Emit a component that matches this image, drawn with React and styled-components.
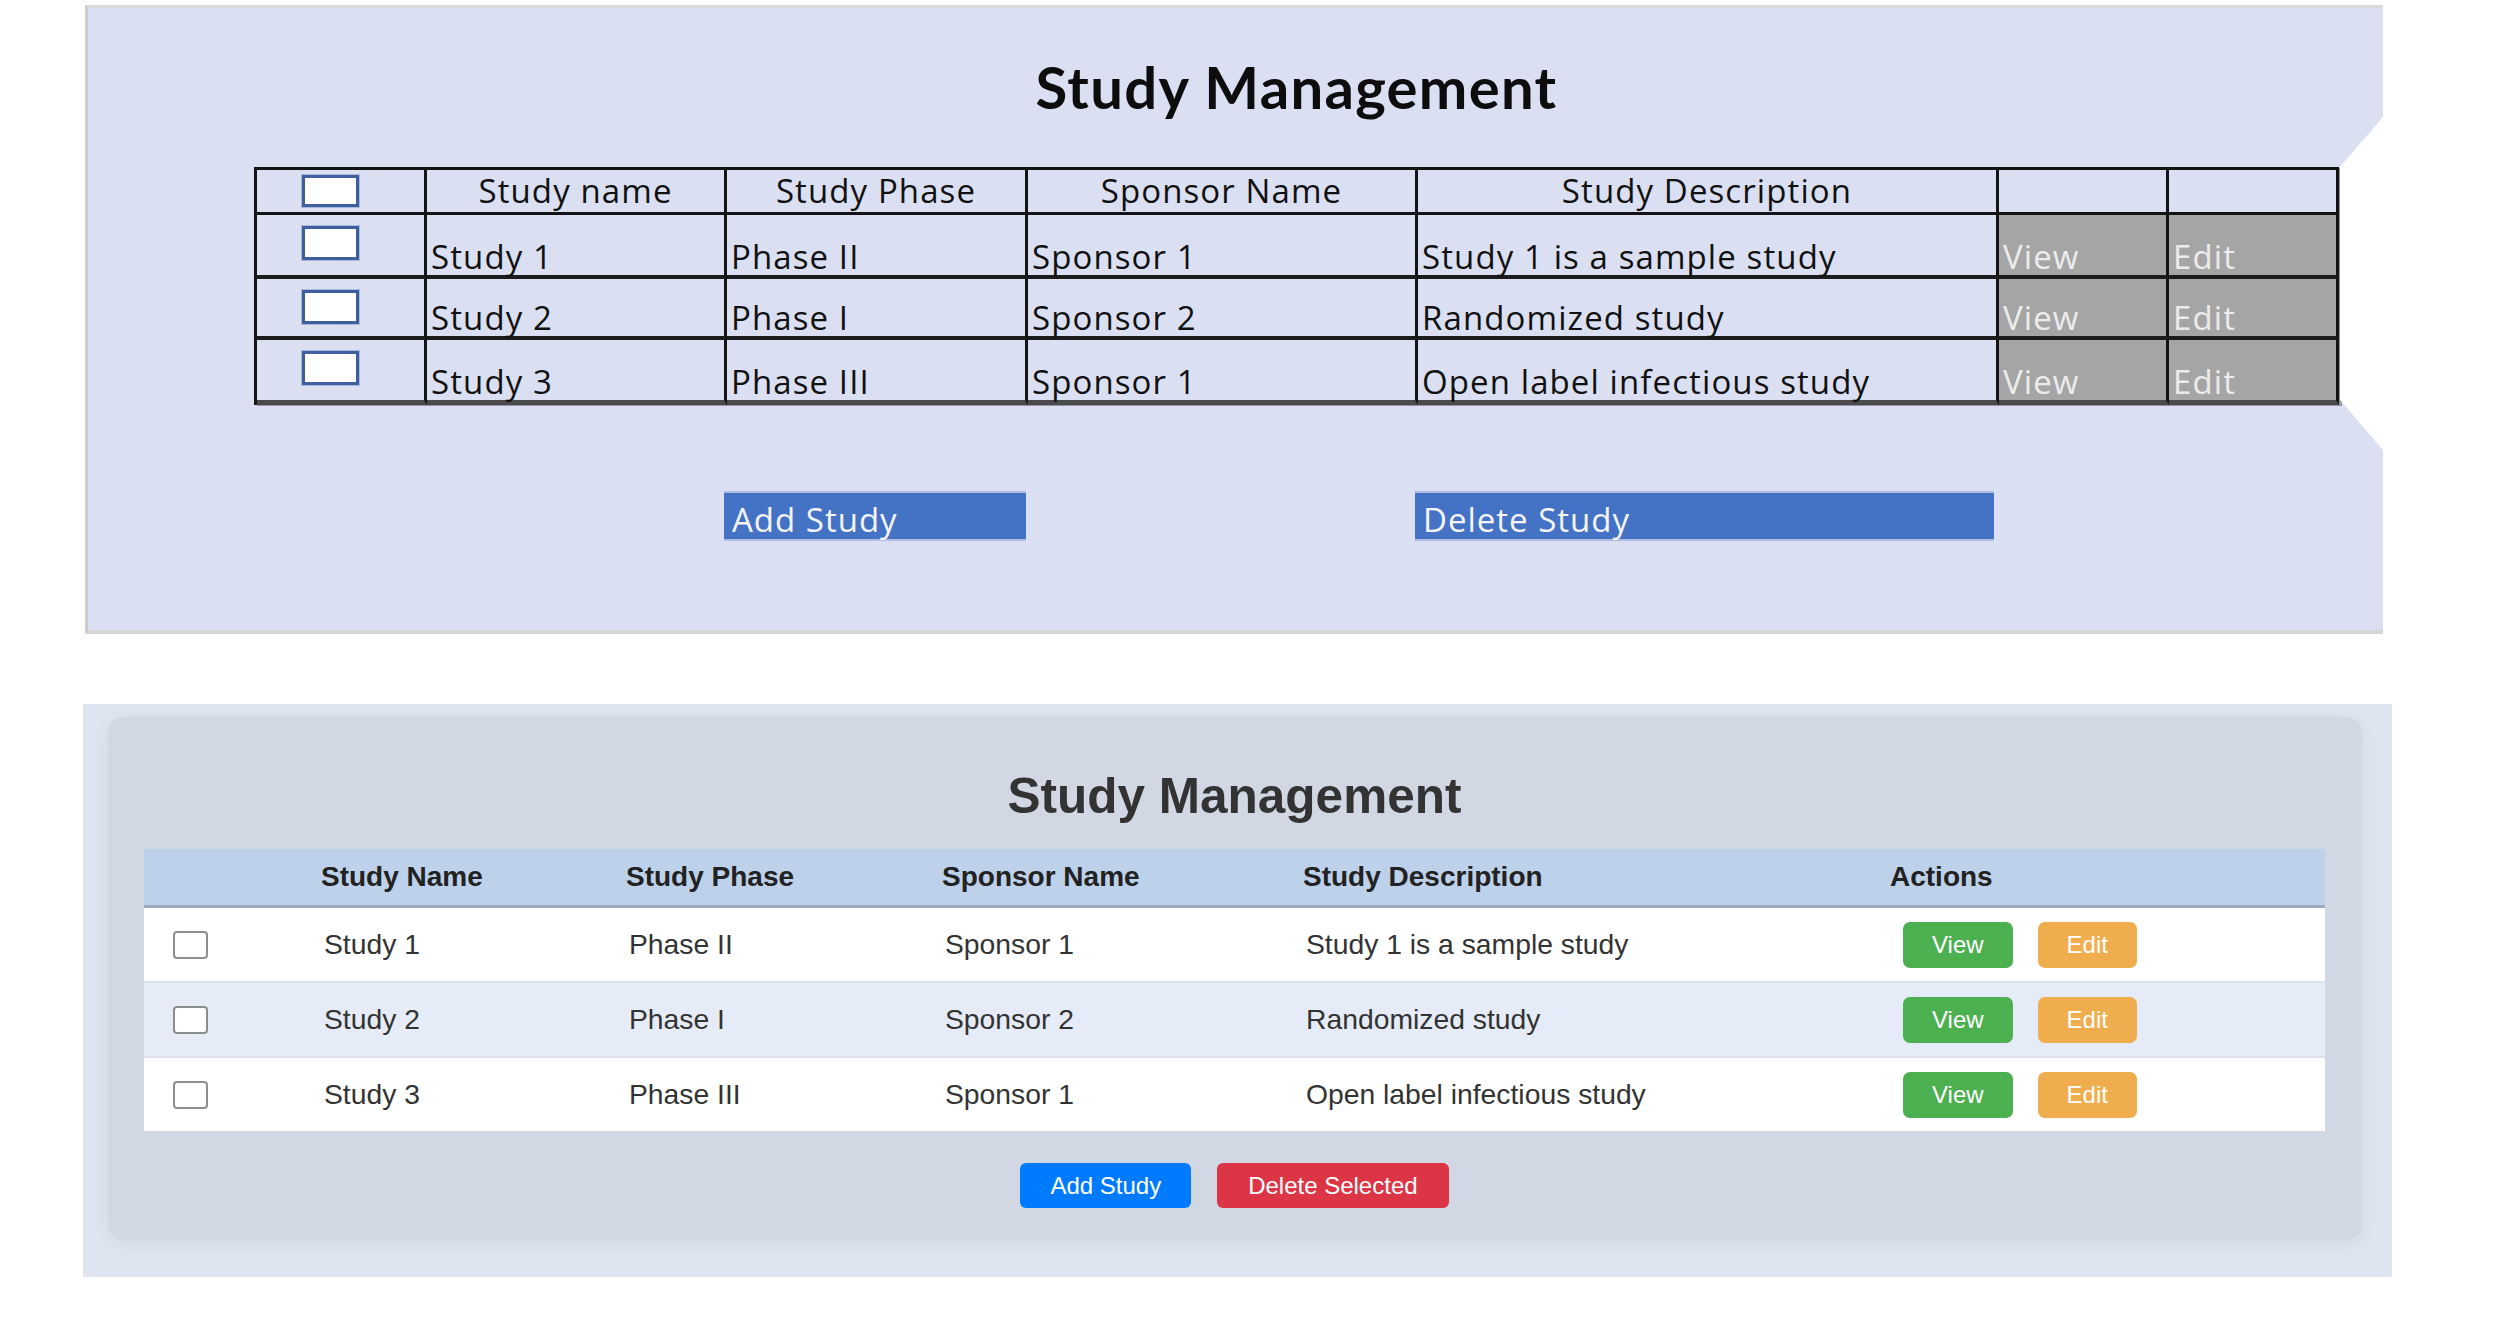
import React from 'react';
import styled, { createGlobalStyle } from 'styled-components';

const Global = createGlobalStyle`
  html, body { margin: 0; padding: 0; background: #ffffff; }
  body { font-family: "Liberation Sans", Arial, sans-serif; }
  * { box-sizing: border-box; }
`;

const studies = [
  { name: 'Study 1', phase: 'Phase II', sponsor: 'Sponsor 1', desc: 'Study 1 is a sample study' },
  { name: 'Study 2', phase: 'Phase I', sponsor: 'Sponsor 2', desc: 'Randomized study' },
  { name: 'Study 3', phase: 'Phase III', sponsor: 'Sponsor 1', desc: 'Open label infectious study' },
];

const Page = styled.main`
  display: flex;
  flex-direction: column;
  align-items: flex-start;
  gap: 70px;
  padding: 5px 0 0 83px;
`;

/* ---------- Mockup (top) ---------- */

const MockPanel = styled.section`
  width: 2298px;
  height: 629px;
  margin-left: 2px;
  background: #dae0f2;
  border-top: 3px solid #d9d9d9;
  border-left: 3px solid #cbcbcb;
  border-bottom: 4px solid #d5d5d5;
  padding-left: 166px;
  display: flex;
  flex-direction: column;
  align-items: flex-start;
  clip-path: polygon(0 0, 2298px 0, 2298px 112px, 2255px 162px, 2255px 395px, 2298px 445px, 2298px 100%, 0 100%);
`;

const MockTitle = styled.h1`
  width: 2085px;
  margin: 44px 0 0 0;
  text-align: center;
  font-family: Lato, "Open Sans", sans-serif;
  font-weight: 700;
  font-size: 58px;
  line-height: 70px;
  letter-spacing: 1.3px;
  color: #0d0d0d;
`;

const mockColumns = '170px 300px 301px 390px 581px 170px 170px';

const MockGrid = styled.div`
  margin-top: 45px;
  display: grid;
  grid-template-columns: ${mockColumns};
  grid-template-rows: 45px 64px 61px 65px;
  border-left: 3px solid #141414;
  border-top: 3px solid #141414;
  box-shadow: 3px 1px 0 rgba(60, 60, 60, 0.45);
`;

const MockCell = styled.div`
  border-right: 3px solid #141414;
  border-bottom: ${p => p.$bw}px solid ${p => p.$bc};
  background: ${p => (p.$gray ? '#a5a5a5' : 'transparent')};
  color: ${p => (p.$gray ? '#ececec' : '#111111')};
  display: flex;
  align-items: ${p => (p.$head ? 'center' : 'flex-end')};
  justify-content: ${p => (p.$head ? 'center' : 'flex-start')};
  padding: ${p => (p.$head ? '0 0 1px 0' : '0 0 2px 4px')};
  font-family: "Open Sans", sans-serif;
  font-size: 33px;
  line-height: 1;
  letter-spacing: 1.1px;
  white-space: nowrap;
`;

const MockBoxCell = styled.div`
  border-right: 3px solid #141414;
  border-bottom: ${p => p.$bw}px solid ${p => p.$bc};
  display: flex;
  align-items: flex-start;
  padding: ${p => (p.$head ? 5 : 11)}px 0 0 45px;
`;

const MockBox = styled.span`
  display: block;
  width: 57px;
  height: ${p => (p.$head ? 32 : 34)}px;
  background: #ffffff;
  border: 3px solid #3e5e9e;
  box-shadow: 0 0 0 1px rgba(120, 145, 200, 0.5);
`;

const MockButtons = styled.div`
  margin-top: 88px;
  display: grid;
  grid-template-columns: ${mockColumns};
`;

const MockButton = styled.div`
  grid-column: ${p => p.$col};
  width: ${p => p.$w}px;
  height: 46px;
  background: #4472c4;
  box-shadow: 0 -2px 0 #aebde3, 0 2px 0 #aebde3;
  color: #f4f4f4;
  font-family: "Open Sans", sans-serif;
  font-size: 33px;
  line-height: 1;
  letter-spacing: 1px;
  display: flex;
  align-items: flex-end;
  padding: 0 0 3px 8px;
`;

/* ---------- Implementation (bottom) ---------- */

const Outer = styled.section`
  width: 2309px;
  height: 573px;
  background: #dfe5f0;
  padding: 13px 30px 37px 25px;
`;

const Card = styled.div`
  height: 100%;
  background: #d1d8e3;
  border-radius: 16px;
  box-shadow: 0 4px 18px rgba(40, 60, 90, 0.08);
  padding: 51px 37px 32px 36px;
  display: flex;
  flex-direction: column;
  align-items: center;
`;

const Title = styled.h2`
  margin: 0;
  font-size: 49.5px;
  line-height: 55px;
  font-weight: 700;
  color: #333333;
`;

const Table = styled.div`
  width: 100%;
  margin-top: 26px;
`;

const Row = styled.div`
  display: grid;
  grid-template-columns: 161px 305px 316px 361px 587px 1fr;
  align-items: center;
  height: ${p => (p.$head ? 59 : 75)}px;
  background: ${p => (p.$head ? '#bdd1ea' : p.$alt ? '#e6ecf7' : '#ffffff')};
  border-bottom: ${p => (p.$head ? '3px solid #9eabbd' : '2px solid #dde3ec')};
  &:last-child {
    border-bottom: none;
    height: 73px;
  }
`;

const Cell = styled.div`
  padding-left: ${p => (p.$head ? 16 : 19)}px;
  font-size: ${p => (p.$head ? 28 : 28.3)}px;
  font-weight: ${p => (p.$head ? 700 : 400)};
  color: ${p => (p.$head ? '#222222' : '#333333')};
  white-space: nowrap;
`;

const Check = styled.input.attrs({ type: 'checkbox' })`
  appearance: none;
  display: block;
  margin: 0 0 0 10px;
  width: 35px;
  height: 28px;
  background: #ffffff;
  border: 2px solid #8e8e8e;
  border-radius: 4px;
`;

const Actions = styled.div`
  display: flex;
  gap: 25px;
  padding-left: 29px;
`;

const Btn = styled.button`
  height: ${p => p.$h || 46}px;
  padding: 0 ${p => p.$px || 29}px;
  border: none;
  border-radius: ${p => p.$r || 7}px;
  background: ${p => p.$bg};
  color: #ffffff;
  font-family: "Liberation Sans", Arial, sans-serif;
  font-size: 24px;
  line-height: 1;
`;

const Footer = styled.div`
  display: flex;
  gap: 26px;
  margin-top: 32px;
`;

export default function App() {
  const rowBorders = [
    { bw: 4, bc: '#1c1c1c' },
    { bw: 4, bc: '#1c1c1c' },
    { bw: 5, bc: '#4a4a4a' },
  ];
  return (
    <>
      <Global />
      <Page>
        <MockPanel>
          <MockTitle>Study Management</MockTitle>
          <MockGrid>
            <MockBoxCell $head $bw={3} $bc="#141414"><MockBox $head /></MockBoxCell>
            <MockCell $head $bw={3} $bc="#141414">Study name</MockCell>
            <MockCell $head $bw={3} $bc="#141414">Study Phase</MockCell>
            <MockCell $head $bw={3} $bc="#141414">Sponsor Name</MockCell>
            <MockCell $head $bw={3} $bc="#141414">Study Description</MockCell>
            <MockCell $head $bw={3} $bc="#141414" />
            <MockCell $head $bw={3} $bc="#141414" />
            {studies.map((s, i) => (
              <React.Fragment key={s.name}>
                <MockBoxCell $bw={rowBorders[i].bw} $bc={rowBorders[i].bc}><MockBox /></MockBoxCell>
                <MockCell $bw={rowBorders[i].bw} $bc={rowBorders[i].bc}>{s.name}</MockCell>
                <MockCell $bw={rowBorders[i].bw} $bc={rowBorders[i].bc}>{s.phase}</MockCell>
                <MockCell $bw={rowBorders[i].bw} $bc={rowBorders[i].bc}>{s.sponsor}</MockCell>
                <MockCell $bw={rowBorders[i].bw} $bc={rowBorders[i].bc}>{s.desc}</MockCell>
                <MockCell $gray $bw={rowBorders[i].bw} $bc={rowBorders[i].bc}>View</MockCell>
                <MockCell $gray $bw={rowBorders[i].bw} $bc={rowBorders[i].bc}>Edit</MockCell>
              </React.Fragment>
            ))}
          </MockGrid>
          <MockButtons>
            <MockButton $col={3} $w={302}>Add Study</MockButton>
            <MockButton $col={5} $w={579}>Delete Study</MockButton>
          </MockButtons>
        </MockPanel>

        <Outer>
          <Card>
            <Title>Study Management</Title>
            <Table>
              <Row $head>
                <Cell $head />
                <Cell $head>Study Name</Cell>
                <Cell $head>Study Phase</Cell>
                <Cell $head>Sponsor Name</Cell>
                <Cell $head>Study Description</Cell>
                <Cell $head>Actions</Cell>
              </Row>
              {studies.map((s, i) => (
                <Row key={s.name} $alt={i % 2 === 1}>
                  <Cell><Check /></Cell>
                  <Cell>{s.name}</Cell>
                  <Cell>{s.phase}</Cell>
                  <Cell>{s.sponsor}</Cell>
                  <Cell>{s.desc}</Cell>
                  <Actions>
                    <Btn $bg="#4caf50">View</Btn>
                    <Btn $bg="#f0ad4e">Edit</Btn>
                  </Actions>
                </Row>
              ))}
            </Table>
            <Footer>
              <Btn $bg="#007bff" $h={45} $px={30} $r={6}>Add Study</Btn>
              <Btn $bg="#dc3545" $h={45} $px={31} $r={6}>Delete Selected</Btn>
            </Footer>
          </Card>
        </Outer>
      </Page>
    </>
  );
}
